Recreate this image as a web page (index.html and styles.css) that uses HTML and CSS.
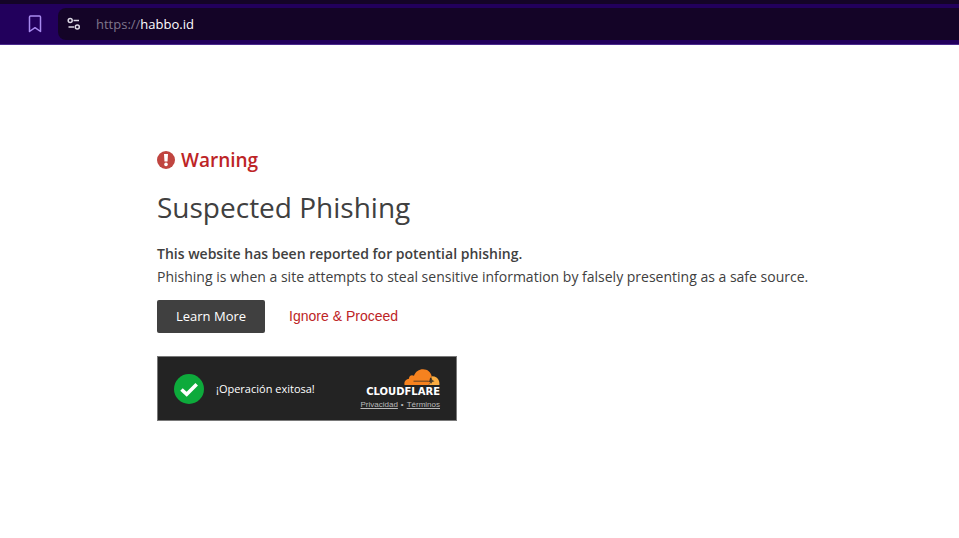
FILE: index.html
```
<!DOCTYPE html>
<html lang="en">
<head>
    <meta charset="UTF-8">
    <meta name="viewport" content="width=device-width, initial-scale=1.0">
    <title>Suspected Phishing</title>
    <link rel="stylesheet" href="styles.css">
</head>
<body>
    <header class="toolbar">
        <button class="bookmark" type="button" aria-label="Bookmark">
            <svg width="14" height="18" viewBox="0 0 14 18" fill="none" stroke="#a98af0" stroke-width="1.5" stroke-linejoin="round">
                <path d="M2.5 1H11.5Q12.5 1 12.5 2V16.5L7 12.7L1.5 16.5V2Q1.5 1 2.5 1Z"/>
            </svg>
        </button>
        <div class="address">
            <svg width="14" height="14" viewBox="0 0 14 14" fill="none" stroke="#dcd8e4" stroke-width="1.5">
                <circle cx="3.2" cy="3.5" r="2"/>
                <path d="M6.5 3.5H12"/>
                <circle cx="10.3" cy="10" r="2"/>
                <path d="M1.5 10H7"/>
            </svg>
            <p class="url"><span class="scheme">https://</span>habbo.id</p>
        </div>
    </header>

    <main class="content">
        <h2 class="warning">
            <svg width="18" height="18" viewBox="0 0 18 18">
                <circle cx="9" cy="9" r="9" fill="#c04540"/>
                <path d="M7 3H11L10.5 10.4H7.5Z" fill="#fff"/>
                <circle cx="9" cy="13.4" r="1.8" fill="#fff"/>
            </svg>
            Warning
        </h2>
        <h1 class="title">Suspected Phishing</h1>
        <p class="text"><strong>This website has been reported for potential phishing.</strong></p>
        <p class="text">Phishing is when a site attempts to steal sensitive information by falsely presenting as a safe source.</p>

        <div class="actions">
            <a class="learn-more" href="#">Learn More</a>
            <button class="proceed" type="button">Ignore &amp; Proceed</button>
        </div>

        <div class="turnstile">
            <svg width="30" height="30" viewBox="0 0 30 30">
                <circle cx="15" cy="15" r="15" fill="#0daa3b"/>
                <path d="M7.5 15.5L12.7 20.3L22.7 10.3" fill="none" stroke="#fff" stroke-width="3.6"/>
            </svg>
            <p class="status">¡Operación exitosa!</p>
            <div class="brand">
                <svg width="36" height="17" viewBox="0 0 36 17">
                    <path d="M25 16C27 12 27 9 27.5 7.2Q33.5 7 35 12Q35.6 14 35.4 16Z" fill="#fbad41"/>
                    <path d="M0.5 16C0 12.5 1.8 10.3 5 9.8C4.8 7 7.5 5.2 10 6.8C11.5 2.5 15 0.2 19 0.2C23.5 0.2 26.8 3 27.7 7.3L25.5 10.3L27 12.2L24.5 16Z" fill="#f6821f"/>
                    <path d="M9.5 11.6H24V12.8H9.5Z" fill="#232323" fill-opacity="0.6"/>
                    <path d="M23.5 12.2L26.3 11L27.5 8.5L28.3 11L30.5 12.2L28.3 13L27 15L26 13.2Z" fill="#232323" fill-opacity="0.8"/>
                </svg>
                <span class="brand-name">CLOUDFLARE</span>
                <p class="terms"><a href="#">Privacidad</a><span>•</span><a href="#">Términos</a></p>
            </div>
        </div>
    </main>
</body>
</html>
```
FILE: styles.css
```
body {
    font-family: "Segoe UI", "Open Sans", "Noto Sans", sans-serif;
    background-color: #fff;
    color: #404040;
    margin: 0;
}

h1, h2, p {
    margin: 0;
}

svg {
    display: block;
    flex: none;
}

.toolbar {
    display: flex;
    align-items: center;
    background-color: #22005c;
    border-top: 4px solid #140427;
    border-bottom: 1px solid #4a2a8c;
    padding: 4px 0 4px 28px;
}

.bookmark {
    background: none;
    border: none;
    padding: 0;
    margin-right: 16px;
    cursor: pointer;
}

.address {
    display: flex;
    flex: 1;
    align-items: center;
    gap: 15px;
    height: 32px;
    padding-left: 9px;
    background-color: #140427;
    border-radius: 8px 0 0 8px;
}

.url {
    color: #fff;
    font-size: 13px;
    line-height: 20px;
}

.scheme {
    color: #7f768c;
}

.content {
    padding: 100px 120px 40px 157px;
}

.warning {
    display: flex;
    align-items: center;
    gap: 6px;
    color: #bd2426;
    font-size: 19px;
    font-weight: 600;
    line-height: 30px;
}

.title {
    font-size: 28px;
    font-weight: 400;
    line-height: 36px;
    margin: 14px 0 17px;
}

.text {
    font-size: 14px;
    line-height: 23px;
}

.text strong {
    font-weight: 600;
}

.actions {
    display: flex;
    gap: 24px;
    margin-top: 12px;
}

.learn-more {
    background-color: #404040;
    border-radius: 2px;
    color: #fff;
    font-size: 13px;
    line-height: 33px;
    padding: 0 19px;
    text-decoration: none;
}

.proceed {
    background: none;
    border: none;
    color: #bd2426;
    cursor: pointer;
    font-family: "Liberation Sans", Arial, sans-serif;
    font-size: 14px;
    line-height: 32px;
    padding: 0;
    align-self: flex-start;
}

.turnstile {
    display: flex;
    align-items: center;
    box-sizing: border-box;
    width: 300px;
    height: 65px;
    margin-top: 23px;
    padding: 0 16px;
    background-color: #232323;
    border: 1px solid #797979;
}

.status {
    color: #fff;
    font-size: 11px;
    margin-left: 12px;
}

.brand {
    display: flex;
    flex-direction: column;
    align-items: flex-end;
    margin-left: auto;
    padding-top: 4px;
}

.brand-name {
    color: #fff;
    font-family: "DejaVu Sans", sans-serif;
    font-size: 10px;
    font-weight: 700;
    line-height: 12px;
}

.terms {
    display: flex;
    gap: 3px;
    color: #bbb;
    font-family: "Liberation Sans", Arial, sans-serif;
    font-size: 8px;
    line-height: 14px;
}

.terms a {
    color: #bbb;
}
```
